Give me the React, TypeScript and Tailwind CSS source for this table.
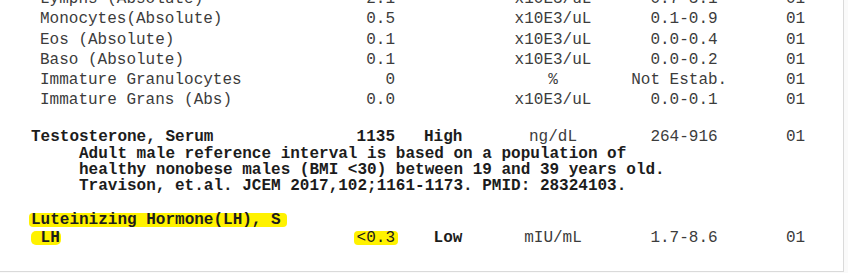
const labRows = [
    { name: "Lymphs (Absolute)", value: "2.1", units: "x10E3/uL", range: "0.7-3.1" },
    { name: "Monocytes(Absolute)", value: "0.5", units: "x10E3/uL", range: "0.1-0.9" },
    { name: "Eos (Absolute)", value: "0.1", units: "x10E3/uL", range: "0.0-0.4" },
    { name: "Baso (Absolute)", value: "0.1", units: "x10E3/uL", range: "0.0-0.2" },
    { name: "Immature Granulocytes", value: "0", units: "%", range: "Not Estab. " },
    { name: "Immature Grans (Abs)", value: "0.0", units: "x10E3/uL", range: "0.0-0.1" },
];

const notes = [
    "Adult male reference interval is based on a population of",
    "healthy nonobese males (BMI <30) between 19 and 39 years old.",
    "Travison, et.al. JCEM 2017,102;1161-1173. PMID: 28324103.",
];

const App = () => {
    return (
        <div className="w-full h-[273px] bg-[#fafafa] overflow-hidden">
            <div
                className="w-[844px] h-[272px] bg-white border-r border-b border-[#dadada] overflow-hidden pl-[31px] text-[16px] whitespace-pre"
                style={{ fontFamily: '"Liberation Mono", "Courier New", monospace' }}
            >
                <div className="-mt-[11px] text-[#3c3c3c]">
                    {labRows.map((r, i) => (
                        <div key={i} className="flex items-center h-[20.25px] leading-[20.25px]">
                            <div className="w-[269px] shrink-0 pl-[9px]">{r.name}</div>
                            <div className="w-[95px] shrink-0 text-right">{r.value}</div>
                            <div className="w-[108px] shrink-0"></div>
                            <div className="w-[100px] shrink-0 text-center">{r.units}</div>
                            <div className="w-[162px] shrink-0 text-center">{r.range}</div>
                            <div className="pl-[21px]">01</div>
                        </div>
                    ))}
                </div>

                <div className="mt-[18px] font-bold text-[#1c1c1c]">
                    <div className="flex items-center h-[17px] leading-[17px]">
                        <div className="w-[269px] shrink-0">Testosterone, Serum</div>
                        <div className="w-[95px] shrink-0 text-right">1135</div>
                        <div className="w-[108px] shrink-0 pl-[29px]">High</div>
                        <div className="w-[100px] shrink-0 text-center font-normal text-[#3c3c3c]">ng/dL</div>
                        <div className="w-[162px] shrink-0 text-center font-normal text-[#3c3c3c]">264-916</div>
                        <div className="pl-[21px] font-normal text-[#3c3c3c]">01</div>
                    </div>
                    {notes.map((n, i) => (
                        <div key={i} className="h-[16px] leading-[16px] pl-[48px]">
                            {n}
                        </div>
                    ))}
                </div>

                <div className="mt-[17px] font-bold text-[#1c1c1c]">
                    <div className="flex items-center h-[18px]">
                        <span className="-ml-[2px] pl-[2px] pr-[6px] h-[14px] leading-[14px] bg-[#fff200] rounded-[4px]">
                            Luteinizing Hormone(LH), S
                        </span>
                    </div>
                    <div className="flex items-center h-[18px] leading-[18px]">
                        <div className="w-[269px] shrink-0 flex items-center">
                            <span className="pr-[1px] h-[14px] leading-[14px] bg-[#fff200] rounded-[5px]"> LH</span>
                        </div>
                        <div className="w-[95px] shrink-0 flex items-center justify-end">
                            <span className="px-[3px] -mr-[3px] h-[14px] leading-[14px] bg-[#fff200] rounded-[4px] font-normal">
                                {"<0.3"}
                            </span>
                        </div>
                        <div className="w-[108px] shrink-0 pl-[29px]"> Low</div>
                        <div className="w-[100px] shrink-0 text-center font-normal text-[#3c3c3c]">mIU/mL</div>
                        <div className="w-[162px] shrink-0 text-center font-normal text-[#3c3c3c]">1.7-8.6</div>
                        <div className="pl-[21px] font-normal text-[#3c3c3c]">01</div>
                    </div>
                </div>
            </div>
        </div>
    );
};

export default App;
